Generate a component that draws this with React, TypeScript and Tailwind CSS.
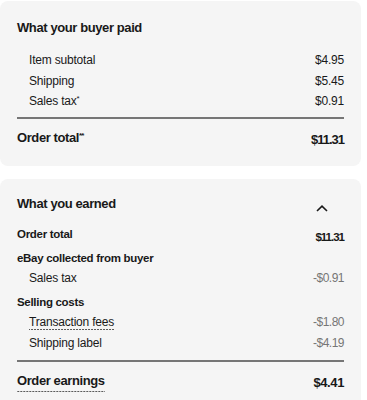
import { ReactNode } from "react";

const dotted =
  "bg-[linear-gradient(to_right,#5a5a5a_2px,transparent_2px)] bg-[length:3px_1px] bg-repeat-x bg-bottom pb-px";

function Row({
  label,
  value,
  muted,
  className = "",
}: {
  label: ReactNode;
  value: string;
  muted?: boolean;
  className?: string;
}) {
  return (
    <div className={`flex justify-between pl-3 text-[12px] tracking-[-0.2px] ${className}`}>
      <span>{label}</span>
      <span className={muted ? "text-[#767676] tracking-[-0.5px]" : ""}>{value}</span>
    </div>
  );
}

function Divider({ className = "" }: { className?: string }) {
  return <div className={`h-[2px] bg-[#767676] ${className}`} />;
}

export default function App() {
  return (
    <div className="w-[367px] h-[400px] overflow-hidden bg-white pt-px font-['Liberation_Sans',Arial,sans-serif] text-[#191919]">
      {/* buyer paid */}
      <section className="w-[361px] rounded-lg bg-[#f5f5f5] px-[17px] pt-[17px] pb-4">
        <h2 className="text-[13px] font-bold leading-5 tracking-[-0.4px]">What your buyer paid</h2>
        <div className="mt-3 leading-[20.5px]">
          <Row label="Item subtotal" value="$4.95" />
          <Row label="Shipping" value="$5.45" />
          <Row
            label={
              <>
                Sales tax<sup className="text-[8px]">*</sup>
              </>
            }
            value="$0.91"
          />
        </div>
        <Divider className="mt-[5.5px]" />
        <div className="mt-[9px] flex items-start justify-between text-[13px] font-bold leading-5">
          <span className="tracking-[-0.4px]">
            Order total<sup className="text-[8px] tracking-[-1px]">**</sup>
          </span>
          <span className="pt-[2px] tracking-[-1px]">$11.31</span>
        </div>
      </section>

      {/* earned */}
      <section className="mt-[13px] w-[361px] rounded-lg bg-[#f5f5f5] px-[17px] pt-[15px] pb-6">
        <div className="flex items-start justify-between">
          <h2 className="text-[13px] font-bold leading-5 tracking-[-0.4px]">What you earned</h2>
          <svg className="mt-[11px] mr-[16px]" width="12" height="7" viewBox="0 0 12 7" fill="none">
            <path d="M1 6L6 1.2L11 6" stroke="#191919" strokeWidth="1.6" />
          </svg>
        </div>

        <div className="mt-[10px] flex items-start justify-between text-[11.5px] font-bold leading-5 tracking-[-0.3px]">
          <span>Order total</span>
          <span className="pt-[3px] tracking-[-1px]">$11.31</span>
        </div>
        <div className="mt-px text-[11.5px] font-bold leading-5 tracking-[-0.3px]">eBay collected from buyer</div>
        <Row label="Sales tax" value="-$0.91" muted className="leading-5" />

        <div className="mt-1 text-[11.5px] font-bold leading-5 tracking-[-0.3px]">Selling costs</div>
        <div className="leading-[21px]">
          <Row label={<span className={dotted}>Transaction fees</span>} value="-$1.80" muted />
          <Row label="Shipping label" value="-$4.19" muted />
        </div>

        <Divider className="mt-[6px]" />
        <div className="mt-[9px] flex items-start justify-between text-[13px] font-bold leading-5 tracking-[-0.4px]">
          <span className={dotted}>Order earnings</span>
          <span className="pt-[2px]">$4.41</span>
        </div>
      </section>
    </div>
  );
}
